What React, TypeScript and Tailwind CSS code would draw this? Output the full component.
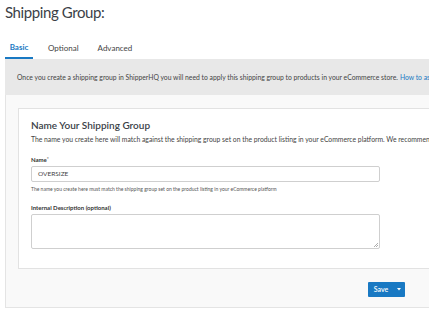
import React from "react";

const tabs = ["Basic", "Optional", "Advanced"];

export default function App() {
  return (
    <div className="w-[429px] h-[317px] overflow-hidden bg-white text-[#333a44] font-['Lato','Liberation_Sans',sans-serif]">
      <h1 className="pl-[5px] pt-[1px] text-[15px] tracking-[-0.4px] leading-[22px] text-[#3b3f47]">
        Shipping Group:
      </h1>

      <div className="flex pl-[5px] mt-[13px] text-[8px]">
        {tabs.map((t, i) => (
          <div
            key={t}
            className={
              i === 0
                ? "w-[28px] h-[23px] flex items-center justify-center font-bold text-[#1979c3] border-b-2 border-[#1979c3]"
                : "h-[23px] flex items-center text-[#444] " + (i === 1 ? "ml-[15px]" : "ml-[19px]")
            }
          >
            {t}
          </div>
        ))}
      </div>

      <div className="ml-[5px] w-[440px] h-[36px] bg-[#e8e8e8] pl-[12px] flex items-center text-[6.8px] text-[#444] whitespace-nowrap">
        Once you create a shipping group in ShipperHQ you will need to apply this shipping group to products in your eCommerce store.{" "}
        <span className="ml-[2px] text-[#1979c3]">How to assign</span>
      </div>

      <div className="ml-[5px] w-[440px] h-[213px] bg-[#f9f9f9] border-l border-b border-[#e4e4e4] pt-[13px] pl-[12px]">
        <div className="w-[440px] h-[161px] bg-white border border-[#e2e2e2] pl-[12px] pt-[10px]">
          <h2 className="text-[10px] leading-[13px] font-semibold text-[#3b3f47]">
            Name Your Shipping Group
          </h2>
          <p className="mt-[2px] text-[6.8px] leading-[10px] text-[#444] whitespace-nowrap">
            The name you create here will match against the shipping group set on the product listing in your eCommerce platform. We recommend
          </p>

          <div className="mt-[11px] text-[6px] font-bold leading-[9px] text-[#333]">
            Name<span className="text-[#888] align-top text-[5px]">*</span>
          </div>
          <div className="mt-[2px] w-[349px] h-[16px] border border-[#cfcfcf] rounded-[2px] pl-[6px] flex items-center text-[6.5px] text-[#444]">
            OVERSIZE
          </div>
          <p className="mt-[3px] text-[5px] leading-[8px] text-[#555]">
            The name you create here must match the shipping group set on the product listing in your eCommerce platform
          </p>

          <div className="mt-[10px] text-[6px] font-bold leading-[9px] text-[#333]">
            Internal Description (optional)
          </div>
          <div className="relative mt-[2px] w-[349px] h-[35px] border border-[#cfcfcf] rounded-[2px]">
            <svg className="absolute right-[1px] bottom-[1px]" width="5" height="5" viewBox="0 0 5 5">
              <path d="M5 1L1 5M5 3L3 5" stroke="#999" strokeWidth="0.8" />
            </svg>
          </div>
        </div>

        <div className="flex mt-[13px] pl-[350px]">
          <div className="flex h-[15px] bg-[#1979c3] text-white text-[7px] font-semibold rounded-[1px]">
            <div className="w-[24px] flex items-center justify-center pl-[2px]">Save</div>
            <div className="w-[13px] flex items-center justify-center">
              <svg width="4" height="3" viewBox="0 0 4 3">
                <path d="M0 0H4L2 2.5Z" fill="white" />
              </svg>
            </div>
          </div>
        </div>
      </div>
    </div>
  );
}
